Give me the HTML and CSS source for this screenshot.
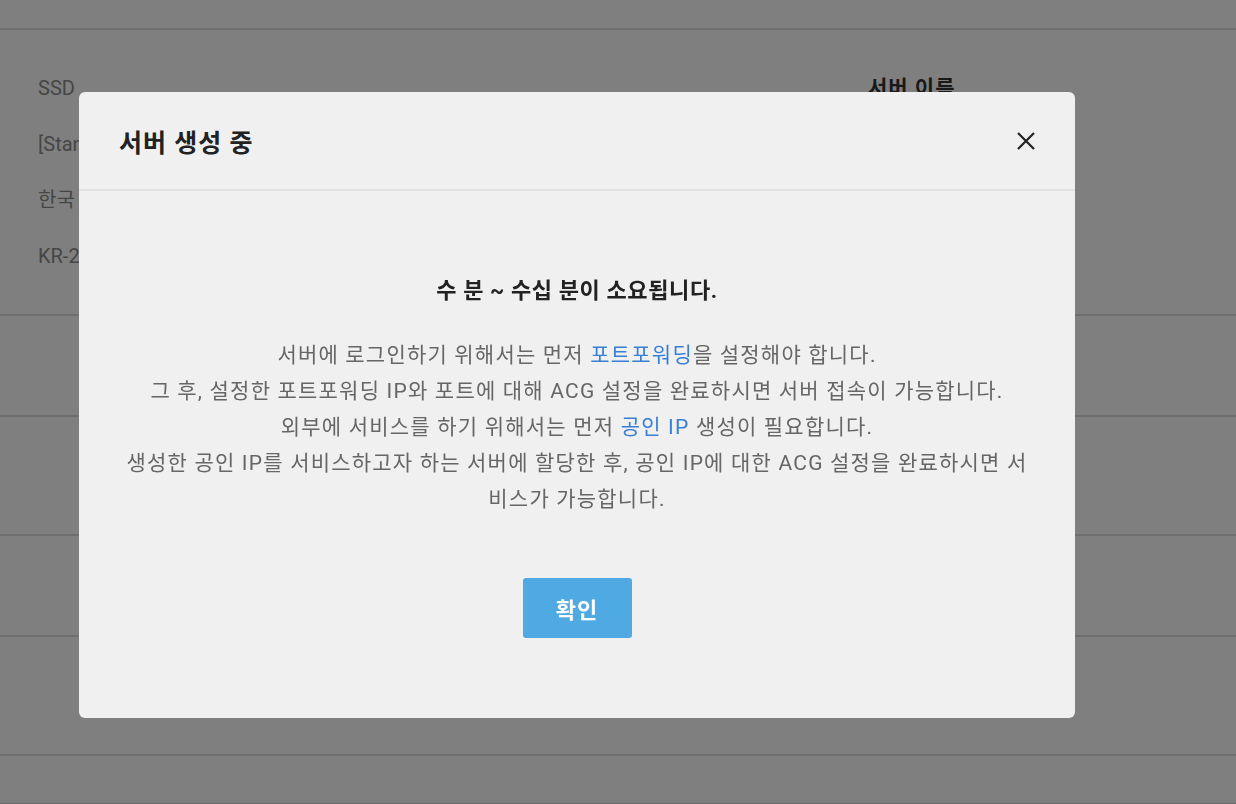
FILE: index.html
```html
<!DOCTYPE html>
<html lang="ko">
<head>
<meta charset="utf-8">
<title>서버 생성 중</title>
<link rel="stylesheet" href="styles.css">
</head>
<body>
<div class="page">
  <div class="topbar"></div>
  <div class="summary">
    <div class="summary-left">
      <div class="item">SSD</div>
      <div class="item">[Standard]</div>
      <div class="item">한국</div>
      <div class="item">KR-2</div>
    </div>
    <div class="summary-right">
      <div class="label">서버 이름</div>
    </div>
  </div>
  <div class="row r1"></div>
  <div class="row r2"></div>
  <div class="row r3"></div>
  <div class="row r4"></div>
  <div class="row r5"></div>
</div>

<div class="overlay">
  <div class="modal">
    <div class="modal-header">
      <h2 class="modal-title">서버 생성 중</h2>
      <button class="close" aria-label="닫기">
        <svg width="18" height="18" viewBox="0 0 18 18"><path d="M1 1L17 17M17 1L1 17" stroke="#222" stroke-width="2.2" fill="none"/></svg>
      </button>
    </div>
    <div class="modal-body">
      <p class="lead">수 분 ~ 수십 분이 소요됩니다.</p>
      <p class="desc">서버에 로그인하기 위해서는 먼저 <a class="link">포트포워딩</a>을 설정해야 합니다.<br>그 후, 설정한 포트포워딩 IP와 포트에 대해 ACG 설정을 완료하시면 서버 접속이 가능합니다.<br>외부에 서비스를 하기 위해서는 먼저 <a class="link">공인 IP</a> 생성이 필요합니다.<br>생성한 공인 IP를 서비스하고자 하는 서버에 할당한 후, 공인 IP에 대한 ACG 설정을 완료하시면 서비스가 가능합니다.</p>
      <div class="actions">
        <button class="confirm">확인</button>
      </div>
    </div>
  </div>
</div>
</body>
</html>
```

FILE: styles.css
```css
* { box-sizing: border-box; }
html, body { margin: 0; padding: 0; }
body {
  font-family: Roboto, "Noto Sans CJK KR", sans-serif;
  background: #fff;
  width: 1236px;
  height: 804px;
  overflow: hidden;
}
.page { width: 100%; }
.topbar {
  height: 30px;
  border-bottom: 2px solid #dcdcdc;
}
.summary {
  display: flex;
  height: 286px;
  padding: 44px 0 0 38px;
  border-bottom: 2px solid #dcdcdc;
}
.summary-left { width: 830px; }
.item {
  font-size: 20px;
  line-height: 56px;
  height: 56px;
  color: #8c8c8c;
  white-space: nowrap;
  margin-top: -14px;
  margin-bottom: 14px;
}
.summary-right .label {
  font-size: 21px;
  font-weight: 700;
  color: #333;
  margin-top: -14px;
  line-height: 56px;
  letter-spacing: 1px;
}
.row { border-bottom: 2px solid #dcdcdc; }
.r1 { height: 101px; }
.r2 { height: 119px; }
.r3 { height: 101px; }
.r4 { height: 119px; }
.r5 { height: 49px; }

.overlay {
  position: fixed;
  inset: 0;
  background: rgba(0, 0, 0, 0.5);
  display: flex;
  align-items: flex-start;
  padding: 92px 0 0 79px;
}
.modal {
  width: 996px;
  height: 626px;
  background: #f0f0f0;
  border-radius: 6px;
  display: flex;
  flex-direction: column;
}
.modal-header {
  height: 99px;
  border-bottom: 2px solid #e2e2e2;
  display: flex;
  align-items: center;
  justify-content: space-between;
  padding: 0 38px 0 40px;
}
.modal-title {
  margin: 0;
  font-size: 25px;
  font-weight: 700;
  color: #222;
  letter-spacing: 1px;
}
.close {
  background: none;
  border: 0;
  padding: 0;
  width: 22px;
  height: 22px;
  display: flex;
  align-items: center;
  justify-content: center;
  cursor: pointer;
}
.modal-body {
  padding: 82px 40px 0;
  text-align: center;
}
.lead {
  margin: 0;
  font-size: 22px;
  font-weight: 700;
  color: #222;
  line-height: 36px;
  letter-spacing: 0.6px;
}
.desc {
  margin: 28px 0 0;
  font-size: 21px;
  line-height: 36px;
  color: #666;
  letter-spacing: 1.2px;
}
.link { color: #3a7fd6; text-decoration: none; }
.actions {
  display: flex;
  justify-content: center;
  margin-top: 61px;
}
.confirm {
  width: 109px;
  height: 60px;
  background: #4faae3;
  border: 0;
  border-radius: 3px;
  color: #fff;
  font-family: Roboto, "Noto Sans CJK KR", sans-serif;
  font-size: 22px;
  font-weight: 700;
  letter-spacing: 1px;
  cursor: pointer;
}
```
